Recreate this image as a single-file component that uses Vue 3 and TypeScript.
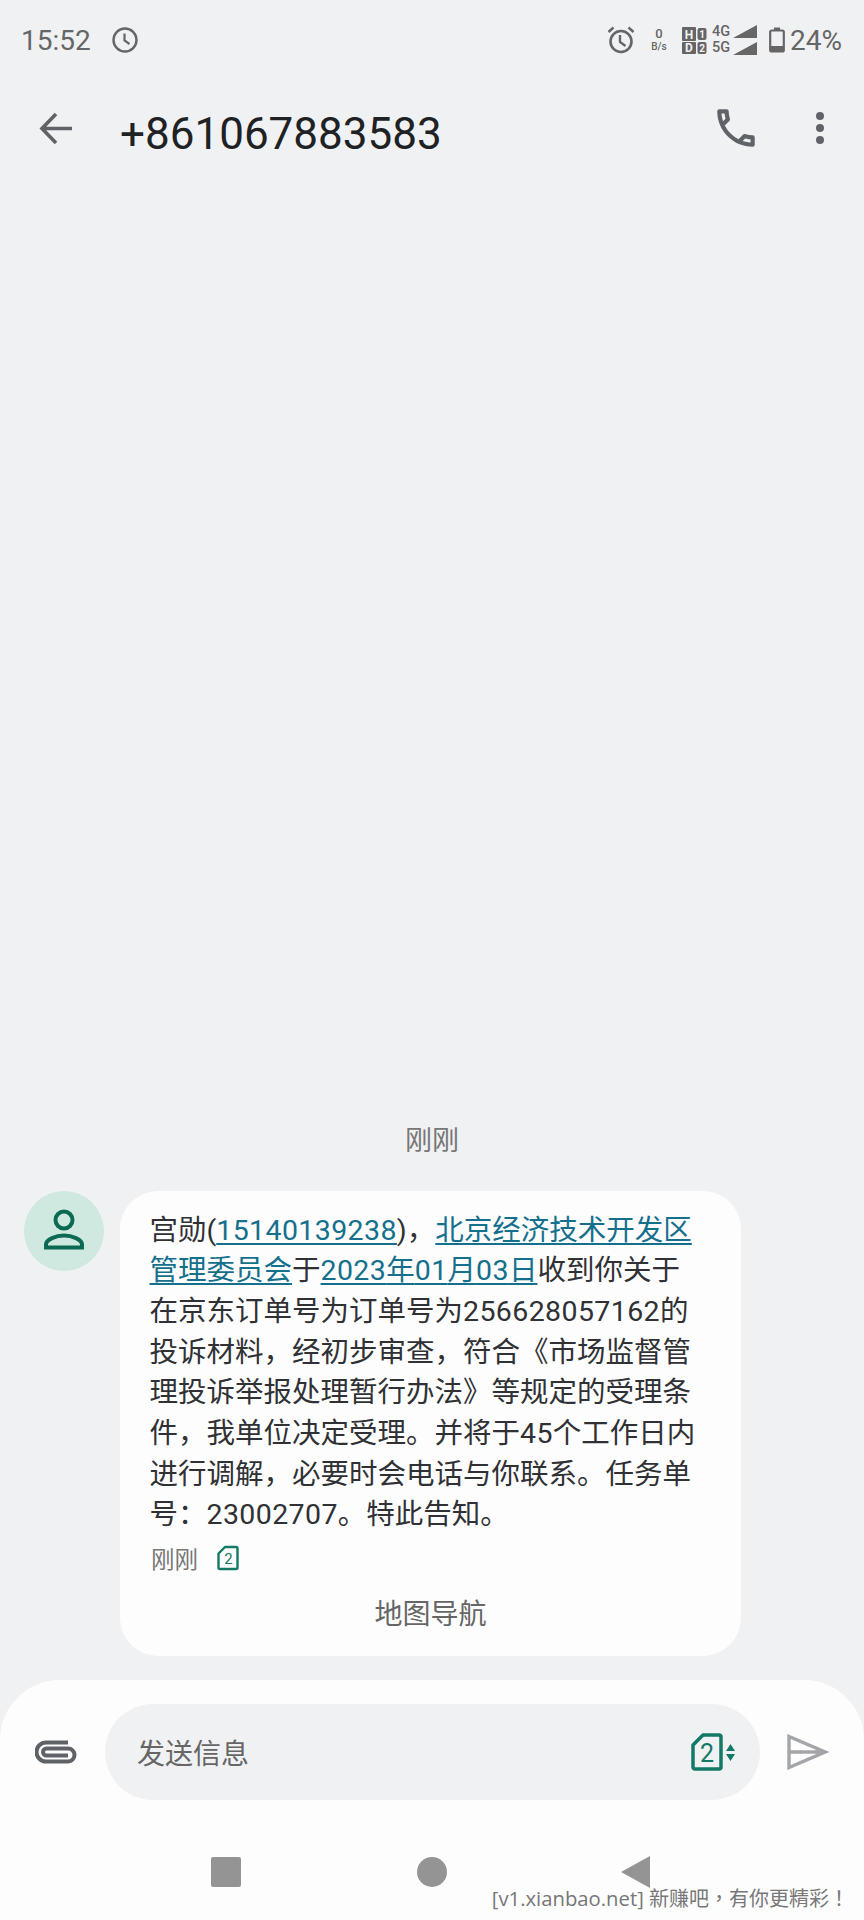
<script setup lang="ts">
const phone = '+861067883583'
</script>

<template>
  <div class="screen">
    <div class="status-bar">
      <div class="status-left">
        <span class="clock-text">15:52</span>
        <svg class="status-clock" width="26" height="26" viewBox="0 0 26 26">
          <circle cx="13" cy="13" r="11.5" fill="none" stroke="#666" stroke-width="2.4" />
          <path d="M12.5 6.5v7l5 3.5" fill="none" stroke="#666" stroke-width="2.2" />
        </svg>
      </div>
      <div class="status-right">
        <svg width="28" height="28" viewBox="0 0 28 28">
          <circle cx="14" cy="15.5" r="10.5" fill="none" stroke="#666" stroke-width="2.6" />
          <path d="M13 9v7l5.500 4" fill="none" stroke="#666" stroke-width="2.4" />
          <path d="M1.500 6l5-4.500M26.500 6l-5-4.500" fill="none" stroke="#666" stroke-width="2.4" />
        </svg>
        <div class="speed">
          <span class="speed-num">0</span>
          <span class="speed-unit">B/s</span>
        </div>
        <svg class="hd-icon" width="25" height="27" viewBox="0 0 25 27">
          <rect x="0" y="0" width="14" height="14" rx="1" fill="#666" />
          <rect x="0" y="15" width="14" height="12" rx="1" fill="#666" />
          <rect x="15.500" y="1" width="9" height="12" rx="2" fill="#666" />
          <rect x="15.500" y="15" width="9" height="12" rx="2" fill="#666" />
          <text x="7" y="11.500" class="hd-text">H</text>
          <text x="7" y="25" class="hd-text">D</text>
          <text x="20" y="11" class="hd-small">1</text>
          <text x="20" y="25" class="hd-small">2</text>
        </svg>
        <div class="net-types">
          <span>4G</span>
          <span>5G</span>
        </div>
        <svg class="signal" width="26" height="30" viewBox="0 0 26 30">
          <path d="M25 0v13H1zM25 17v13H1z" fill="#666" />
        </svg>
        <svg class="battery" width="16" height="26" viewBox="0 0 16 26">
          <path d="M5 0.500h6v2.500h-6z" fill="#666" />
          <rect x="1.200" y="3.500" width="13.600" height="21" rx="1.500" fill="none" stroke="#666" stroke-width="2.200" />
          <rect x="1" y="19" width="14" height="6" fill="#666" />
        </svg>
        <span class="battery-text">24%</span>
      </div>
    </div>

    <div class="toolbar">
      <svg class="back" width="36" height="36" viewBox="0 0 36 36">
        <path d="M34 17.500H5M18 3L4 17.500L18 32" fill="none" stroke="#5f6368" stroke-width="3.600" />
      </svg>
      <div class="title">{{ phone }}</div>
      <svg class="call" width="50" height="50" viewBox="0 0 24 24">
        <path d="M20 15.500c-1.250 0-2.450-.2-3.570-.57a1 1 0 0 0-1.020.24l-2.200 2.200a15.050 15.050 0 0 1-6.590-6.590l2.200-2.200a1 1 0 0 0 .25-1.020A11.360 11.360 0 0 1 8.500 4a1 1 0 0 0-1-1H4a1 1 0 0 0-1 1c0 9.390 7.610 17 17 17a1 1 0 0 0 1-1v-3.500a1 1 0 0 0-1-1zM5.030 5h1.500c.07.880.220 1.750.450 2.580l-1.200 1.200c-.410-1.200-.670-2.470-.750-3.780zM19 18.970c-1.320-.09-2.590-.35-3.800-.760l1.200-1.200c.850.240 1.720.390 2.600.450v1.510z" fill="#5f6368" />
      </svg>
      <div class="more">
        <i></i><i></i><i></i>
      </div>
    </div>

    <div class="messages">
      <div class="time-label">刚刚</div>
      <div class="message-row">
        <div class="avatar">
          <svg width="80" height="80" viewBox="0 0 80 80">
            <circle cx="40" cy="29" r="8.500" fill="none" stroke="#0b6b52" stroke-width="4" />
            <path d="M22 56.500v-3c0-5 10-9 18-9s18 4 18 9v3z" fill="none" stroke="#0b6b52" stroke-width="4" />
          </svg>
        </div>
        <div class="bubble">
          <div class="bubble-text">
            宫勋(<a class="link num">15140139238</a>)，<a class="link">北京经济技术开发区</a><br />
            <a class="link">管理委员会</a>于<a class="link"><span class="num">2023</span>年<span class="num">01</span>月<span class="num">03</span>日</a>收到你关于<br />
            在京东订单号为订单号为<span class="num">256628057162</span>的<br />
            投诉材料，经初步审查，符合《市场监督管<br />
            理投诉举报处理暂行办法》等规定的受理条<br />
            件，我单位决定受理。并将于<span class="num">45</span>个工作日内<br />
            进行调解，必要时会电话与你联系。任务单<br />
            号：<span class="num">23002707</span>。特此告知。
          </div>
          <div class="bubble-meta">
            <span class="meta-time">刚刚</span>
            <svg class="meta-sim" width="22" height="26" viewBox="0 0 22 26">
              <path d="M8 2h11a1.500 1.500 0 0 1 1.500 1.500v19a1.500 1.500 0 0 1-1.500 1.500H3a1.500 1.500 0 0 1-1.500-1.500V8.500z" fill="none" stroke="#127a64" stroke-width="2.400" stroke-linejoin="round" />
              <text x="11.500" y="19" class="sim-num">2</text>
            </svg>
          </div>
          <div class="bubble-action">地图导航</div>
        </div>
      </div>
    </div>

    <div class="composer">
      <div class="composer-row">
        <svg class="attach" width="42" height="24" viewBox="0 0 42 24">
          <path d="M33 15.500H11.500a3.500 3.500 0 0 1 0-7H33a6.500 6.500 0 0 1 0 13H11a9 9 0 0 1 0-19h22" fill="none" stroke="#5f6368" stroke-width="4" />
        </svg>
        <div class="input-box">
          <span class="placeholder">发送信息</span>
          <svg class="input-sim" width="45" height="38" viewBox="0 0 45 38">
            <path d="M12 2h16a2 2 0 0 1 2 2v30a2 2 0 0 1-2 2H4a2 2 0 0 1-2-2V12z" fill="none" stroke="#127a64" stroke-width="3.500" stroke-linejoin="round" />
            <text x="16" y="28.500" class="sim-big">2</text>
            <path d="M35 18l4.500-7 4.500 7zM35 21l4.500 7 4.500-7z" fill="#127a64" />
          </svg>
        </div>
        <svg class="send" width="42" height="36" viewBox="0 0 42 36">
          <path d="M2 2.500L38 18 2 33.500zM2 18h36" fill="none" stroke="#a3a5a8" stroke-width="3.400" stroke-linejoin="miter" />
        </svg>
      </div>
      <div class="nav-row">
        <span class="nav-square"></span>
        <span class="nav-circle"></span>
        <svg width="30" height="34" viewBox="0 0 30 34">
          <path d="M30 1v32L1 17z" fill="#949494" />
        </svg>
      </div>
      <div class="watermark" lang="zh-Hant"><span class="watermark-site">[v1.xianbao.net]</span> 新赚吧，有你更精彩！</div>
    </div>
  </div>
</template>

<style>
html,
body {
  margin: 0;
  background: #f0f1f3;
}
</style>

<style scoped>
.screen {
  width: 864px;
  height: 1920px;
  display: flex;
  flex-direction: column;
  background: #f0f1f3;
  font-family: Roboto, "Noto Sans CJK SC", sans-serif;
  overflow: hidden;
  position: relative;
}

.status-bar {
  height: 80px;
  display: flex;
  align-items: center;
  justify-content: space-between;
  padding: 0 22px 0 21px;
  box-sizing: border-box;
  color: #666;
}

.status-left {
  display: flex;
  align-items: center;
  gap: 21px;
}

.clock-text {
  font-size: 28px;
}

.status-right {
  display: flex;
  align-items: center;
}

.speed {
  display: flex;
  flex-direction: column;
  align-items: center;
  margin-left: 14px;
  width: 20px;
  line-height: 13px;
}

.speed-num {
  font-size: 13px;
  font-weight: 500;
}

.speed-unit {
  font-size: 10px;
  font-weight: 500;
}

.hd-icon {
  margin-left: 13px;
}

.hd-text {
  font-size: 12px;
  font-weight: 700;
  fill: #f0f1f3;
  text-anchor: middle;
}

.hd-small {
  font-size: 10px;
  font-weight: 700;
  fill: #f0f1f3;
  text-anchor: middle;
}

.net-types {
  display: flex;
  flex-direction: column;
  margin-left: 5px;
  font-size: 14.500px;
  line-height: 16px;
  font-weight: 500;
}

.signal {
  margin-left: 2px;
}

.battery {
  margin-left: 11px;
}

.battery-text {
  font-size: 28px;
  margin-left: 5px;
}

.toolbar {
  height: 108px;
  display: flex;
  align-items: center;
  padding-left: 38px;
  box-sizing: border-box;
}

.back {
  flex: none;
  margin-top: -11px;
}

.title {
  margin-left: 46px;
  font-size: 44px;
  color: #202124;
  flex: 1;
}

.call {
  flex: none;
  margin-top: -12px;
}

.more {
  width: 8px;
  margin: -12px 40px 0 55px;
  display: flex;
  flex-direction: column;
  gap: 4px;
}

.more i {
  display: block;
  width: 8px;
  height: 8px;
  border-radius: 50%;
  background: #5f6368;
}

.messages {
  flex: 1;
  display: flex;
  flex-direction: column;
  justify-content: flex-end;
  padding-bottom: 24px;
}

.time-label {
  text-align: center;
  font-size: 27px;
  line-height: 40px;
  color: #777;
  margin-bottom: 30px;
}

.message-row {
  display: flex;
  gap: 16px;
  padding-left: 24px;
}

.avatar {
  width: 80px;
  height: 80px;
  border-radius: 50%;
  background: #cfe8e0;
  flex: none;
}

.bubble {
  width: 621px;
  box-sizing: border-box;
  background: #fdfdfe;
  border-radius: 38px;
  padding: 20px 0 21px 29.500px;
}

.bubble-text {
  font-size: 28.500px;
  line-height: 40.650px;
  color: #303134;
  white-space: nowrap;
}

.num {
  letter-spacing: 0.400px;
}

.link {
  color: #14708c;
  text-decoration: underline;
  text-decoration-thickness: 2px;
  text-underline-offset: 3px;
}

.bubble-meta {
  display: flex;
  align-items: center;
  height: 30px;
  margin-top: 7px;
  padding-left: 1.500px;
}

.meta-time {
  font-size: 23.500px;
  color: #777;
}

.meta-sim {
  margin-left: 18.500px;
}

.sim-num {
  font-size: 15px;
  fill: #127a64;
  text-anchor: middle;
}

.sim-big {
  font-size: 25px;
  fill: #127a64;
  text-anchor: middle;
}

.bubble-action {
  margin-top: 22px;
  height: 40px;
  line-height: 40px;
  text-align: center;
  font-size: 28px;
  color: #666;
  padding-right: 29.500px;
}

.composer {
  height: 240px;
  background: #fdfdfe;
  border-radius: 60px 60px 0 0;
  position: relative;
}

.composer-row {
  display: flex;
  align-items: center;
  padding: 24px 0 0 35px;
}

.attach {
  flex: none;
}

.input-box {
  margin-left: 28px;
  width: 655px;
  height: 96px;
  box-sizing: border-box;
  border-radius: 48px;
  background: #f0f1f3;
  display: flex;
  align-items: center;
  justify-content: space-between;
  padding: 0 24px 0 32px;
}

.placeholder {
  font-size: 28px;
  color: #666;
}

.send {
  flex: none;
  margin-left: 27px;
}

.nav-row {
  display: flex;
  align-items: center;
  height: 40px;
  margin-top: 52px;
  padding-left: 211px;
}

.nav-square {
  width: 30px;
  height: 30px;
  border-radius: 2px;
  background: #949494;
  margin-right: 176px;
}

.nav-circle {
  width: 30px;
  height: 30px;
  border-radius: 50%;
  background: #949494;
  margin-right: 173px;
}

.watermark {
  position: absolute;
  right: 15px;
  bottom: 7px;
  font-family: "Open Sans", "Noto Sans CJK TC", sans-serif;
  font-size: 20px;
  line-height: 28px;
  color: #777;
  white-space: nowrap;
}

.watermark-site {
  font-size: 20.300px;
}
</style>
